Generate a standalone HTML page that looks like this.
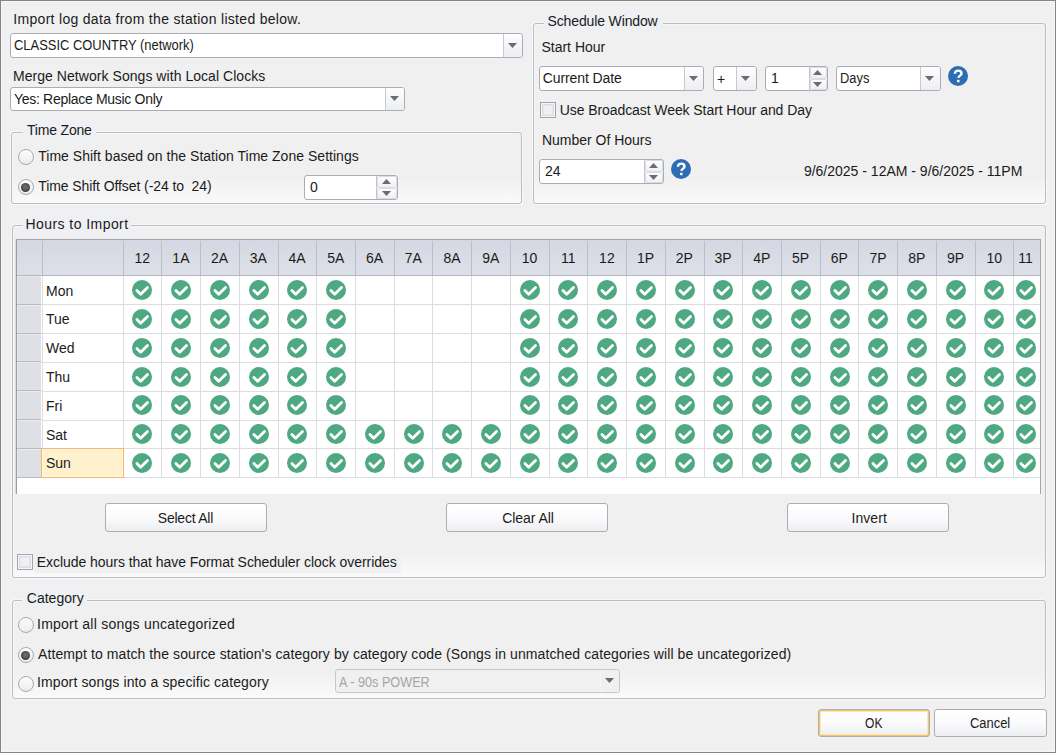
<!DOCTYPE html><html><head><meta charset="utf-8"><title>Import</title><style>
*{margin:0;padding:0;box-sizing:border-box}
html,body{width:1056px;height:753px;overflow:hidden;background:#f0f0f0}
body{position:relative;font-family:"Liberation Sans",sans-serif;font-size:14px;color:#1b1b1b}
.t{position:absolute;white-space:nowrap;line-height:16px}
.frame{position:absolute;left:0;top:0;width:1056px;height:753px;border:1px solid #858585}
.frame2{position:absolute;left:1px;top:1px;width:1054px;height:751px;border:1px solid #f6f6f6}
.grp{position:absolute;border:1px solid #bcbcc3;border-radius:3px;background:linear-gradient(rgba(250,250,250,0) calc(100% - 26px),#fafafa);box-shadow:-1px -1px 0 #f7f8fb, 1px 1px 0 #f8f9fb, inset 1px 1px 0 #f6f6f6}
.gtb{position:absolute;background:#eef0f3;border-radius:3px}
.cmb{position:absolute;background:#fff;border:1px solid #acacb4;border-radius:3px}
.cmb.dis{background:#f0f0f0;border-color:#c6c6cc}
.cbtn{position:absolute;border-left:1px solid #c8c8ce;background:linear-gradient(#fdfdfd,#eceef2);border-radius:0 2px 2px 0}
.cbtn.dis{background:#f0f0f0;border-left-color:#f6f6f6}
.sbtn{position:absolute;border:1px solid #dcdce2;border-radius:2px;background:linear-gradient(#fdfdfd,#eef0f3)}
.arr{position:absolute;width:9px;height:5px;line-height:0}
.arr svg{display:block}
.rad{position:absolute;width:16px;height:16px;border-radius:50%;border:1px solid #a8a8ae;background:linear-gradient(#fdfdfd,#ececee)}
.dot{position:absolute;width:9px;height:9px;border-radius:50%;background:radial-gradient(circle at 50% 45%,#727276 0,#58585c 45%,#1a1a1c 100%)}
.chk{position:absolute;width:16px;height:16px;border:1px solid #a4a4ac;background:#eef0f3;box-shadow:inset 0 0 0 1px #f4f5f7,inset 0 0 0 2px #dedfe4,inset 0 0 0 3px #e4e6ea}
.btn{position:absolute;border:1px solid #adadb4;border-radius:3px;background:linear-gradient(#ffffff 0%,#fbfbfc 50%,#eceef2 100%)}
.btn.def{box-shadow:inset 0 0 0 1px #f3c56a,inset 0 0 0 2px #fbe7b8}
.ico{position:absolute;width:20px;height:20px;line-height:0}
.ico svg{display:block}
.gl{position:absolute;background:#dcdce3}
</style></head><body>
<div class="frame"></div><div class="frame2"></div>
<div class="t" style="left:13.30px;top:11px;letter-spacing:0.304px;">Import log data from the station listed below.</div>
<div class="cmb" style="left:10px;top:33px;width:513px;height:25px"></div>
<div class="cbtn" style="left:503px;top:34px;width:19px;height:23px"></div>
<div class="arr" style="left:507.7px;top:42.8px"><svg width="9" height="5" viewBox="0 0 9 5"><path d="M0 0H9L4.5 5Z" fill="#6b6b76"/></svg></div>
<div class="t" style="left:14px;top:37px;"></div>
<div class="t" style="left:14.30px;top:37px;transform:scaleX(0.9236);transform-origin:0 0;">CLASSIC COUNTRY (network)</div>
<div class="t" style="left:13.00px;top:68px;letter-spacing:0.049px;">Merge Network Songs with Local Clocks</div>
<div class="cmb" style="left:10px;top:87px;width:395px;height:24px"></div>
<div class="cbtn" style="left:385px;top:88px;width:19px;height:22px"></div>
<div class="arr" style="left:389.7px;top:96.3px"><svg width="9" height="5" viewBox="0 0 9 5"><path d="M0 0H9L4.5 5Z" fill="#6b6b76"/></svg></div>
<div class="t" style="left:14px;top:91px;"></div>
<div class="t" style="left:14.00px;top:91px;letter-spacing:-0.300px;">Yes: Replace Music Only</div>
<div class="grp" style="left:11px;top:132px;width:511px;height:72px"></div>
<div class="gtb" style="left:23px;top:119px;width:73px;height:22px"></div>
<div class="t" style="left:27px;top:122px;"></div>
<div class="t" style="left:27.00px;top:122px;letter-spacing:-0.188px;">Time Zone</div>
<div class="rad" style="left:17.5px;top:149px"></div>
<div class="t" style="left:38.20px;top:148px;letter-spacing:0.025px;">Time Shift based on the Station Time Zone Settings</div>
<div class="rad" style="left:17.5px;top:179px"></div>
<div class="dot" style="left:21.0px;top:182.5px"></div>
<div class="t" style="left:38.20px;top:178px;letter-spacing:-0.082px;">Time Shift Offset (-24 to&nbsp; 24)</div>
<div class="cmb" style="left:304px;top:175px;width:94px;height:25px"></div>
<div style="position:absolute;left:376px;top:176px;width:1px;height:23px;background:#c4c4cc"></div>
<div class="sbtn" style="left:377px;top:176px;width:20px;height:11.5px"></div>
<div class="sbtn" style="left:377px;top:187.5px;width:20px;height:11.5px"></div>
<div class="arr" style="left:381.8px;top:179.25px"><svg width="9" height="5" viewBox="0 0 9 5"><path d="M0 5H9L4.5 0Z" fill="#6b6b76"/></svg></div>
<div class="arr" style="left:381.8px;top:190.75px"><svg width="9" height="5" viewBox="0 0 9 5"><path d="M0 0H9L4.5 5Z" fill="#6b6b76"/></svg></div>
<div class="t" style="left:310px;top:179px;">0</div>
<div class="grp" style="left:533px;top:23px;width:513px;height:181px"></div>
<div class="gtb" style="left:544px;top:10px;width:119px;height:22px"></div>
<div class="t" style="left:547px;top:13px;"></div>
<div class="t" style="left:547.50px;top:13px;letter-spacing:-0.132px;">Schedule Window</div>
<div class="t" style="left:541.40px;top:39px;letter-spacing:0.007px;">Start Hour</div>
<div class="cmb" style="left:539px;top:66px;width:165px;height:25px"></div>
<div class="cbtn" style="left:684px;top:67px;width:19px;height:23px"></div>
<div class="arr" style="left:688.7px;top:75.8px"><svg width="9" height="5" viewBox="0 0 9 5"><path d="M0 0H9L4.5 5Z" fill="#6b6b76"/></svg></div>
<div class="t" style="left:543px;top:70px;"></div>
<div class="t" style="left:542.80px;top:70px;letter-spacing:-0.114px;">Current Date</div>
<div class="cmb" style="left:713px;top:66px;width:44px;height:25px"></div>
<div class="cbtn" style="left:736px;top:67px;width:20px;height:23px"></div>
<div class="arr" style="left:741.2px;top:75.8px"><svg width="9" height="5" viewBox="0 0 9 5"><path d="M0 0H9L4.5 5Z" fill="#6b6b76"/></svg></div>
<div class="t" style="left:717px;top:71px;">+</div>
<div class="cmb" style="left:765px;top:66px;width:63px;height:25px"></div>
<div style="position:absolute;left:809px;top:67px;width:1px;height:23px;background:#c4c4cc"></div>
<div class="sbtn" style="left:810px;top:67px;width:17px;height:11.5px"></div>
<div class="sbtn" style="left:810px;top:78.5px;width:17px;height:11.5px"></div>
<div class="arr" style="left:813.3px;top:70.25px"><svg width="9" height="5" viewBox="0 0 9 5"><path d="M0 5H9L4.5 0Z" fill="#6b6b76"/></svg></div>
<div class="arr" style="left:813.3px;top:81.75px"><svg width="9" height="5" viewBox="0 0 9 5"><path d="M0 0H9L4.5 5Z" fill="#6b6b76"/></svg></div>
<div class="t" style="left:771px;top:70px;">1</div>
<div class="cmb" style="left:836px;top:66px;width:105px;height:25px"></div>
<div class="cbtn" style="left:920px;top:67px;width:20px;height:23px"></div>
<div class="arr" style="left:925.2px;top:75.8px"><svg width="9" height="5" viewBox="0 0 9 5"><path d="M0 0H9L4.5 5Z" fill="#6b6b76"/></svg></div>
<div class="t" style="left:840px;top:70px;"></div>
<div class="t" style="left:839.68px;top:70px;transform:scaleX(0.9192);transform-origin:0 0;">Days</div>
<div class="ico" style="left:948px;top:66px"><svg width="20" height="20" viewBox="0 0 20 20"><circle cx="10" cy="10" r="10" fill="#2e6db4"/><path d="M6.9 7.7C6.9 5.6 8.3 4.6 10.2 4.6C12.2 4.6 13.5 5.7 13.5 7.4C13.5 9.6 10.7 9.6 10.4 11.9" stroke="#fff" stroke-width="2.4" fill="none"/><rect x="9.1" y="13.8" width="2.4" height="2.4" fill="#fff"/></svg></div>
<div class="chk" style="left:540px;top:102px"></div>
<div class="t" style="left:559.70px;top:102px;letter-spacing:-0.077px;">Use Broadcast Week Start Hour and Day</div>
<div class="t" style="left:542.00px;top:132px;letter-spacing:-0.021px;">Number Of Hours</div>
<div class="cmb" style="left:539px;top:159px;width:125px;height:25px"></div>
<div style="position:absolute;left:644px;top:160px;width:1px;height:23px;background:#c4c4cc"></div>
<div class="sbtn" style="left:645px;top:160px;width:18px;height:11.5px"></div>
<div class="sbtn" style="left:645px;top:171.5px;width:18px;height:11.5px"></div>
<div class="arr" style="left:648.8px;top:163.25px"><svg width="9" height="5" viewBox="0 0 9 5"><path d="M0 5H9L4.5 0Z" fill="#6b6b76"/></svg></div>
<div class="arr" style="left:648.8px;top:174.75px"><svg width="9" height="5" viewBox="0 0 9 5"><path d="M0 0H9L4.5 5Z" fill="#6b6b76"/></svg></div>
<div class="t" style="left:545px;top:163px;">24</div>
<div class="ico" style="left:671px;top:159px"><svg width="20" height="20" viewBox="0 0 20 20"><circle cx="10" cy="10" r="10" fill="#2e6db4"/><path d="M6.9 7.7C6.9 5.6 8.3 4.6 10.2 4.6C12.2 4.6 13.5 5.7 13.5 7.4C13.5 9.6 10.7 9.6 10.4 11.9" stroke="#fff" stroke-width="2.4" fill="none"/><rect x="9.1" y="13.8" width="2.4" height="2.4" fill="#fff"/></svg></div>
<div class="t" style="left:803.90px;top:163px;letter-spacing:0.001px;">9/6/2025 - 12AM - 9/6/2025 - 11PM</div>
<div class="grp" style="left:12px;top:225px;width:1034px;height:353px"></div>
<div class="gtb" style="left:23px;top:213px;width:108px;height:22px"></div>
<div class="t" style="left:26.5px;top:216px;"></div>
<div class="t" style="left:25.50px;top:216px;letter-spacing:0.437px;">Hours to Import</div>
<div style="position:absolute;left:16px;top:239px;width:1025px;height:255px;background:#fff;border-left:1px solid #9c9ca4;border-top:1px solid #a4a4ac;border-right:1px solid #a4a4ac;box-shadow:-0.5px 0 0 #c8c8ce"></div>
<div style="position:absolute;left:17px;top:240px;width:1023px;height:36px;background:linear-gradient(#d5d8e2,#dde0e8);border-bottom:1px solid #b4b6c0"></div>
<div style="position:absolute;left:17px;top:276px;width:24px;height:202px;background:#dfe0e5"></div>
<div style="position:absolute;left:17px;top:276.0px;width:24px;height:27.8px;border-top:1px solid #ebebef;border-left:1px solid #ebebef"></div>
<div style="position:absolute;left:17px;top:303.8px;width:24px;height:1px;background:#b9b9c1"></div>
<div style="position:absolute;left:17px;top:304.8px;width:24px;height:27.8px;border-top:1px solid #ebebef;border-left:1px solid #ebebef"></div>
<div style="position:absolute;left:17px;top:332.6px;width:24px;height:1px;background:#b9b9c1"></div>
<div style="position:absolute;left:17px;top:333.6px;width:24px;height:27.8px;border-top:1px solid #ebebef;border-left:1px solid #ebebef"></div>
<div style="position:absolute;left:17px;top:361.4px;width:24px;height:1px;background:#b9b9c1"></div>
<div style="position:absolute;left:17px;top:362.4px;width:24px;height:27.8px;border-top:1px solid #ebebef;border-left:1px solid #ebebef"></div>
<div style="position:absolute;left:17px;top:390.2px;width:24px;height:1px;background:#b9b9c1"></div>
<div style="position:absolute;left:17px;top:391.2px;width:24px;height:27.8px;border-top:1px solid #ebebef;border-left:1px solid #ebebef"></div>
<div style="position:absolute;left:17px;top:419.0px;width:24px;height:1px;background:#b9b9c1"></div>
<div style="position:absolute;left:17px;top:420.0px;width:24px;height:27.8px;border-top:1px solid #ebebef;border-left:1px solid #ebebef"></div>
<div style="position:absolute;left:17px;top:447.8px;width:24px;height:1px;background:#b9b9c1"></div>
<div style="position:absolute;left:17px;top:448.8px;width:24px;height:27.8px;border-top:1px solid #ebebef;border-left:1px solid #ebebef"></div>
<div style="position:absolute;left:17px;top:476.6px;width:24px;height:1px;background:#b9b9c1"></div>
<div style="position:absolute;left:41.5px;top:241px;width:1px;height:34px;background:#bcbec8"></div>
<div style="position:absolute;left:122.6px;top:241px;width:1px;height:34px;background:#bcbec8"></div>
<div style="position:absolute;left:161.3px;top:241px;width:1px;height:34px;background:#bcbec8"></div>
<div style="position:absolute;left:200.1px;top:241px;width:1px;height:34px;background:#bcbec8"></div>
<div style="position:absolute;left:238.8px;top:241px;width:1px;height:34px;background:#bcbec8"></div>
<div style="position:absolute;left:277.5px;top:241px;width:1px;height:34px;background:#bcbec8"></div>
<div style="position:absolute;left:316.2px;top:241px;width:1px;height:34px;background:#bcbec8"></div>
<div style="position:absolute;left:355.0px;top:241px;width:1px;height:34px;background:#bcbec8"></div>
<div style="position:absolute;left:393.7px;top:241px;width:1px;height:34px;background:#bcbec8"></div>
<div style="position:absolute;left:432.4px;top:241px;width:1px;height:34px;background:#bcbec8"></div>
<div style="position:absolute;left:471.1px;top:241px;width:1px;height:34px;background:#bcbec8"></div>
<div style="position:absolute;left:509.9px;top:241px;width:1px;height:34px;background:#bcbec8"></div>
<div style="position:absolute;left:548.6px;top:241px;width:1px;height:34px;background:#bcbec8"></div>
<div style="position:absolute;left:587.3px;top:241px;width:1px;height:34px;background:#bcbec8"></div>
<div style="position:absolute;left:626.0px;top:241px;width:1px;height:34px;background:#bcbec8"></div>
<div style="position:absolute;left:664.8px;top:241px;width:1px;height:34px;background:#bcbec8"></div>
<div style="position:absolute;left:703.5px;top:241px;width:1px;height:34px;background:#bcbec8"></div>
<div style="position:absolute;left:742.2px;top:241px;width:1px;height:34px;background:#bcbec8"></div>
<div style="position:absolute;left:780.9px;top:241px;width:1px;height:34px;background:#bcbec8"></div>
<div style="position:absolute;left:819.7px;top:241px;width:1px;height:34px;background:#bcbec8"></div>
<div style="position:absolute;left:858.4px;top:241px;width:1px;height:34px;background:#bcbec8"></div>
<div style="position:absolute;left:897.1px;top:241px;width:1px;height:34px;background:#bcbec8"></div>
<div style="position:absolute;left:935.8px;top:241px;width:1px;height:34px;background:#bcbec8"></div>
<div style="position:absolute;left:974.6px;top:241px;width:1px;height:34px;background:#bcbec8"></div>
<div style="position:absolute;left:1013.3px;top:241px;width:1px;height:34px;background:#bcbec8"></div>
<div class="gl" style="left:41px;top:304.3px;width:999px;height:1px"></div>
<div class="gl" style="left:41px;top:333.1px;width:999px;height:1px"></div>
<div class="gl" style="left:41px;top:361.9px;width:999px;height:1px"></div>
<div class="gl" style="left:41px;top:390.7px;width:999px;height:1px"></div>
<div class="gl" style="left:41px;top:419.5px;width:999px;height:1px"></div>
<div class="gl" style="left:41px;top:448.3px;width:999px;height:1px"></div>
<div class="gl" style="left:41px;top:477.1px;width:999px;height:1px"></div>
<div class="gl" style="left:41.5px;top:276px;width:1px;height:202px"></div>
<div class="gl" style="left:122.6px;top:276px;width:1px;height:202px"></div>
<div class="gl" style="left:161.3px;top:276px;width:1px;height:202px"></div>
<div class="gl" style="left:200.1px;top:276px;width:1px;height:202px"></div>
<div class="gl" style="left:238.8px;top:276px;width:1px;height:202px"></div>
<div class="gl" style="left:277.5px;top:276px;width:1px;height:202px"></div>
<div class="gl" style="left:316.2px;top:276px;width:1px;height:202px"></div>
<div class="gl" style="left:355.0px;top:276px;width:1px;height:202px"></div>
<div class="gl" style="left:393.7px;top:276px;width:1px;height:202px"></div>
<div class="gl" style="left:432.4px;top:276px;width:1px;height:202px"></div>
<div class="gl" style="left:471.1px;top:276px;width:1px;height:202px"></div>
<div class="gl" style="left:509.9px;top:276px;width:1px;height:202px"></div>
<div class="gl" style="left:548.6px;top:276px;width:1px;height:202px"></div>
<div class="gl" style="left:587.3px;top:276px;width:1px;height:202px"></div>
<div class="gl" style="left:626.0px;top:276px;width:1px;height:202px"></div>
<div class="gl" style="left:664.8px;top:276px;width:1px;height:202px"></div>
<div class="gl" style="left:703.5px;top:276px;width:1px;height:202px"></div>
<div class="gl" style="left:742.2px;top:276px;width:1px;height:202px"></div>
<div class="gl" style="left:780.9px;top:276px;width:1px;height:202px"></div>
<div class="gl" style="left:819.7px;top:276px;width:1px;height:202px"></div>
<div class="gl" style="left:858.4px;top:276px;width:1px;height:202px"></div>
<div class="gl" style="left:897.1px;top:276px;width:1px;height:202px"></div>
<div class="gl" style="left:935.8px;top:276px;width:1px;height:202px"></div>
<div class="gl" style="left:974.6px;top:276px;width:1px;height:202px"></div>
<div class="gl" style="left:1013.3px;top:276px;width:1px;height:202px"></div>
<div class="t" style="left:122.19999999999999px;top:249.5px;width:40px;text-align:center;">12</div>
<div class="t" style="left:160.926px;top:249.5px;width:40px;text-align:center;">1A</div>
<div class="t" style="left:199.652px;top:249.5px;width:40px;text-align:center;">2A</div>
<div class="t" style="left:238.378px;top:249.5px;width:40px;text-align:center;">3A</div>
<div class="t" style="left:277.10400000000004px;top:249.5px;width:40px;text-align:center;">4A</div>
<div class="t" style="left:315.83000000000004px;top:249.5px;width:40px;text-align:center;">5A</div>
<div class="t" style="left:354.55600000000004px;top:249.5px;width:40px;text-align:center;">6A</div>
<div class="t" style="left:393.28200000000004px;top:249.5px;width:40px;text-align:center;">7A</div>
<div class="t" style="left:432.00800000000004px;top:249.5px;width:40px;text-align:center;">8A</div>
<div class="t" style="left:470.73400000000004px;top:249.5px;width:40px;text-align:center;">9A</div>
<div class="t" style="left:509.46000000000004px;top:249.5px;width:40px;text-align:center;">10</div>
<div class="t" style="left:548.186px;top:249.5px;width:40px;text-align:center;">11</div>
<div class="t" style="left:586.912px;top:249.5px;width:40px;text-align:center;">12</div>
<div class="t" style="left:625.638px;top:249.5px;width:40px;text-align:center;">1P</div>
<div class="t" style="left:664.364px;top:249.5px;width:40px;text-align:center;">2P</div>
<div class="t" style="left:703.09px;top:249.5px;width:40px;text-align:center;">3P</div>
<div class="t" style="left:741.816px;top:249.5px;width:40px;text-align:center;">4P</div>
<div class="t" style="left:780.542px;top:249.5px;width:40px;text-align:center;">5P</div>
<div class="t" style="left:819.268px;top:249.5px;width:40px;text-align:center;">6P</div>
<div class="t" style="left:857.994px;top:249.5px;width:40px;text-align:center;">7P</div>
<div class="t" style="left:896.72px;top:249.5px;width:40px;text-align:center;">8P</div>
<div class="t" style="left:935.446px;top:249.5px;width:40px;text-align:center;">9P</div>
<div class="t" style="left:974.172px;top:249.5px;width:40px;text-align:center;">10</div>
<div class="t" style="left:1005.598px;top:249.5px;width:40px;text-align:center;">11</div>
<div style="position:absolute;left:41px;top:448.3px;width:82.5px;height:29.8px;background:#fff1cd;border:1px solid #f9b66c;box-shadow:inset 0 0 0 1px #fff6df"></div>
<div class="t" style="left:46px;top:282.5px;">Mon</div>
<div class="ico" style="left:132.4px;top:280.1px"><svg width="20" height="20" viewBox="0 0 20 20"><circle cx="10" cy="10" r="10" fill="#4ea982"/><path d="M4.9 10.4L8.7 14.2L15.5 7.6" stroke="#fff" stroke-width="2.8" fill="none" stroke-linecap="round" stroke-linejoin="round"/></svg></div>
<div class="ico" style="left:171.1px;top:280.1px"><svg width="20" height="20" viewBox="0 0 20 20"><circle cx="10" cy="10" r="10" fill="#4ea982"/><path d="M4.9 10.4L8.7 14.2L15.5 7.6" stroke="#fff" stroke-width="2.8" fill="none" stroke-linecap="round" stroke-linejoin="round"/></svg></div>
<div class="ico" style="left:209.9px;top:280.1px"><svg width="20" height="20" viewBox="0 0 20 20"><circle cx="10" cy="10" r="10" fill="#4ea982"/><path d="M4.9 10.4L8.7 14.2L15.5 7.6" stroke="#fff" stroke-width="2.8" fill="none" stroke-linecap="round" stroke-linejoin="round"/></svg></div>
<div class="ico" style="left:248.6px;top:280.1px"><svg width="20" height="20" viewBox="0 0 20 20"><circle cx="10" cy="10" r="10" fill="#4ea982"/><path d="M4.9 10.4L8.7 14.2L15.5 7.6" stroke="#fff" stroke-width="2.8" fill="none" stroke-linecap="round" stroke-linejoin="round"/></svg></div>
<div class="ico" style="left:287.3px;top:280.1px"><svg width="20" height="20" viewBox="0 0 20 20"><circle cx="10" cy="10" r="10" fill="#4ea982"/><path d="M4.9 10.4L8.7 14.2L15.5 7.6" stroke="#fff" stroke-width="2.8" fill="none" stroke-linecap="round" stroke-linejoin="round"/></svg></div>
<div class="ico" style="left:326.0px;top:280.1px"><svg width="20" height="20" viewBox="0 0 20 20"><circle cx="10" cy="10" r="10" fill="#4ea982"/><path d="M4.9 10.4L8.7 14.2L15.5 7.6" stroke="#fff" stroke-width="2.8" fill="none" stroke-linecap="round" stroke-linejoin="round"/></svg></div>
<div class="ico" style="left:519.7px;top:280.1px"><svg width="20" height="20" viewBox="0 0 20 20"><circle cx="10" cy="10" r="10" fill="#4ea982"/><path d="M4.9 10.4L8.7 14.2L15.5 7.6" stroke="#fff" stroke-width="2.8" fill="none" stroke-linecap="round" stroke-linejoin="round"/></svg></div>
<div class="ico" style="left:558.4px;top:280.1px"><svg width="20" height="20" viewBox="0 0 20 20"><circle cx="10" cy="10" r="10" fill="#4ea982"/><path d="M4.9 10.4L8.7 14.2L15.5 7.6" stroke="#fff" stroke-width="2.8" fill="none" stroke-linecap="round" stroke-linejoin="round"/></svg></div>
<div class="ico" style="left:597.1px;top:280.1px"><svg width="20" height="20" viewBox="0 0 20 20"><circle cx="10" cy="10" r="10" fill="#4ea982"/><path d="M4.9 10.4L8.7 14.2L15.5 7.6" stroke="#fff" stroke-width="2.8" fill="none" stroke-linecap="round" stroke-linejoin="round"/></svg></div>
<div class="ico" style="left:635.8px;top:280.1px"><svg width="20" height="20" viewBox="0 0 20 20"><circle cx="10" cy="10" r="10" fill="#4ea982"/><path d="M4.9 10.4L8.7 14.2L15.5 7.6" stroke="#fff" stroke-width="2.8" fill="none" stroke-linecap="round" stroke-linejoin="round"/></svg></div>
<div class="ico" style="left:674.6px;top:280.1px"><svg width="20" height="20" viewBox="0 0 20 20"><circle cx="10" cy="10" r="10" fill="#4ea982"/><path d="M4.9 10.4L8.7 14.2L15.5 7.6" stroke="#fff" stroke-width="2.8" fill="none" stroke-linecap="round" stroke-linejoin="round"/></svg></div>
<div class="ico" style="left:713.3px;top:280.1px"><svg width="20" height="20" viewBox="0 0 20 20"><circle cx="10" cy="10" r="10" fill="#4ea982"/><path d="M4.9 10.4L8.7 14.2L15.5 7.6" stroke="#fff" stroke-width="2.8" fill="none" stroke-linecap="round" stroke-linejoin="round"/></svg></div>
<div class="ico" style="left:752.0px;top:280.1px"><svg width="20" height="20" viewBox="0 0 20 20"><circle cx="10" cy="10" r="10" fill="#4ea982"/><path d="M4.9 10.4L8.7 14.2L15.5 7.6" stroke="#fff" stroke-width="2.8" fill="none" stroke-linecap="round" stroke-linejoin="round"/></svg></div>
<div class="ico" style="left:790.7px;top:280.1px"><svg width="20" height="20" viewBox="0 0 20 20"><circle cx="10" cy="10" r="10" fill="#4ea982"/><path d="M4.9 10.4L8.7 14.2L15.5 7.6" stroke="#fff" stroke-width="2.8" fill="none" stroke-linecap="round" stroke-linejoin="round"/></svg></div>
<div class="ico" style="left:829.5px;top:280.1px"><svg width="20" height="20" viewBox="0 0 20 20"><circle cx="10" cy="10" r="10" fill="#4ea982"/><path d="M4.9 10.4L8.7 14.2L15.5 7.6" stroke="#fff" stroke-width="2.8" fill="none" stroke-linecap="round" stroke-linejoin="round"/></svg></div>
<div class="ico" style="left:868.2px;top:280.1px"><svg width="20" height="20" viewBox="0 0 20 20"><circle cx="10" cy="10" r="10" fill="#4ea982"/><path d="M4.9 10.4L8.7 14.2L15.5 7.6" stroke="#fff" stroke-width="2.8" fill="none" stroke-linecap="round" stroke-linejoin="round"/></svg></div>
<div class="ico" style="left:906.9px;top:280.1px"><svg width="20" height="20" viewBox="0 0 20 20"><circle cx="10" cy="10" r="10" fill="#4ea982"/><path d="M4.9 10.4L8.7 14.2L15.5 7.6" stroke="#fff" stroke-width="2.8" fill="none" stroke-linecap="round" stroke-linejoin="round"/></svg></div>
<div class="ico" style="left:945.6px;top:280.1px"><svg width="20" height="20" viewBox="0 0 20 20"><circle cx="10" cy="10" r="10" fill="#4ea982"/><path d="M4.9 10.4L8.7 14.2L15.5 7.6" stroke="#fff" stroke-width="2.8" fill="none" stroke-linecap="round" stroke-linejoin="round"/></svg></div>
<div class="ico" style="left:984.4px;top:280.1px"><svg width="20" height="20" viewBox="0 0 20 20"><circle cx="10" cy="10" r="10" fill="#4ea982"/><path d="M4.9 10.4L8.7 14.2L15.5 7.6" stroke="#fff" stroke-width="2.8" fill="none" stroke-linecap="round" stroke-linejoin="round"/></svg></div>
<div class="ico" style="left:1015.7px;top:280.1px"><svg width="20" height="20" viewBox="0 0 20 20"><circle cx="10" cy="10" r="10" fill="#4ea982"/><path d="M4.9 10.4L8.7 14.2L15.5 7.6" stroke="#fff" stroke-width="2.8" fill="none" stroke-linecap="round" stroke-linejoin="round"/></svg></div>
<div class="t" style="left:46px;top:311.3px;">Tue</div>
<div class="ico" style="left:132.4px;top:308.9px"><svg width="20" height="20" viewBox="0 0 20 20"><circle cx="10" cy="10" r="10" fill="#4ea982"/><path d="M4.9 10.4L8.7 14.2L15.5 7.6" stroke="#fff" stroke-width="2.8" fill="none" stroke-linecap="round" stroke-linejoin="round"/></svg></div>
<div class="ico" style="left:171.1px;top:308.9px"><svg width="20" height="20" viewBox="0 0 20 20"><circle cx="10" cy="10" r="10" fill="#4ea982"/><path d="M4.9 10.4L8.7 14.2L15.5 7.6" stroke="#fff" stroke-width="2.8" fill="none" stroke-linecap="round" stroke-linejoin="round"/></svg></div>
<div class="ico" style="left:209.9px;top:308.9px"><svg width="20" height="20" viewBox="0 0 20 20"><circle cx="10" cy="10" r="10" fill="#4ea982"/><path d="M4.9 10.4L8.7 14.2L15.5 7.6" stroke="#fff" stroke-width="2.8" fill="none" stroke-linecap="round" stroke-linejoin="round"/></svg></div>
<div class="ico" style="left:248.6px;top:308.9px"><svg width="20" height="20" viewBox="0 0 20 20"><circle cx="10" cy="10" r="10" fill="#4ea982"/><path d="M4.9 10.4L8.7 14.2L15.5 7.6" stroke="#fff" stroke-width="2.8" fill="none" stroke-linecap="round" stroke-linejoin="round"/></svg></div>
<div class="ico" style="left:287.3px;top:308.9px"><svg width="20" height="20" viewBox="0 0 20 20"><circle cx="10" cy="10" r="10" fill="#4ea982"/><path d="M4.9 10.4L8.7 14.2L15.5 7.6" stroke="#fff" stroke-width="2.8" fill="none" stroke-linecap="round" stroke-linejoin="round"/></svg></div>
<div class="ico" style="left:326.0px;top:308.9px"><svg width="20" height="20" viewBox="0 0 20 20"><circle cx="10" cy="10" r="10" fill="#4ea982"/><path d="M4.9 10.4L8.7 14.2L15.5 7.6" stroke="#fff" stroke-width="2.8" fill="none" stroke-linecap="round" stroke-linejoin="round"/></svg></div>
<div class="ico" style="left:519.7px;top:308.9px"><svg width="20" height="20" viewBox="0 0 20 20"><circle cx="10" cy="10" r="10" fill="#4ea982"/><path d="M4.9 10.4L8.7 14.2L15.5 7.6" stroke="#fff" stroke-width="2.8" fill="none" stroke-linecap="round" stroke-linejoin="round"/></svg></div>
<div class="ico" style="left:558.4px;top:308.9px"><svg width="20" height="20" viewBox="0 0 20 20"><circle cx="10" cy="10" r="10" fill="#4ea982"/><path d="M4.9 10.4L8.7 14.2L15.5 7.6" stroke="#fff" stroke-width="2.8" fill="none" stroke-linecap="round" stroke-linejoin="round"/></svg></div>
<div class="ico" style="left:597.1px;top:308.9px"><svg width="20" height="20" viewBox="0 0 20 20"><circle cx="10" cy="10" r="10" fill="#4ea982"/><path d="M4.9 10.4L8.7 14.2L15.5 7.6" stroke="#fff" stroke-width="2.8" fill="none" stroke-linecap="round" stroke-linejoin="round"/></svg></div>
<div class="ico" style="left:635.8px;top:308.9px"><svg width="20" height="20" viewBox="0 0 20 20"><circle cx="10" cy="10" r="10" fill="#4ea982"/><path d="M4.9 10.4L8.7 14.2L15.5 7.6" stroke="#fff" stroke-width="2.8" fill="none" stroke-linecap="round" stroke-linejoin="round"/></svg></div>
<div class="ico" style="left:674.6px;top:308.9px"><svg width="20" height="20" viewBox="0 0 20 20"><circle cx="10" cy="10" r="10" fill="#4ea982"/><path d="M4.9 10.4L8.7 14.2L15.5 7.6" stroke="#fff" stroke-width="2.8" fill="none" stroke-linecap="round" stroke-linejoin="round"/></svg></div>
<div class="ico" style="left:713.3px;top:308.9px"><svg width="20" height="20" viewBox="0 0 20 20"><circle cx="10" cy="10" r="10" fill="#4ea982"/><path d="M4.9 10.4L8.7 14.2L15.5 7.6" stroke="#fff" stroke-width="2.8" fill="none" stroke-linecap="round" stroke-linejoin="round"/></svg></div>
<div class="ico" style="left:752.0px;top:308.9px"><svg width="20" height="20" viewBox="0 0 20 20"><circle cx="10" cy="10" r="10" fill="#4ea982"/><path d="M4.9 10.4L8.7 14.2L15.5 7.6" stroke="#fff" stroke-width="2.8" fill="none" stroke-linecap="round" stroke-linejoin="round"/></svg></div>
<div class="ico" style="left:790.7px;top:308.9px"><svg width="20" height="20" viewBox="0 0 20 20"><circle cx="10" cy="10" r="10" fill="#4ea982"/><path d="M4.9 10.4L8.7 14.2L15.5 7.6" stroke="#fff" stroke-width="2.8" fill="none" stroke-linecap="round" stroke-linejoin="round"/></svg></div>
<div class="ico" style="left:829.5px;top:308.9px"><svg width="20" height="20" viewBox="0 0 20 20"><circle cx="10" cy="10" r="10" fill="#4ea982"/><path d="M4.9 10.4L8.7 14.2L15.5 7.6" stroke="#fff" stroke-width="2.8" fill="none" stroke-linecap="round" stroke-linejoin="round"/></svg></div>
<div class="ico" style="left:868.2px;top:308.9px"><svg width="20" height="20" viewBox="0 0 20 20"><circle cx="10" cy="10" r="10" fill="#4ea982"/><path d="M4.9 10.4L8.7 14.2L15.5 7.6" stroke="#fff" stroke-width="2.8" fill="none" stroke-linecap="round" stroke-linejoin="round"/></svg></div>
<div class="ico" style="left:906.9px;top:308.9px"><svg width="20" height="20" viewBox="0 0 20 20"><circle cx="10" cy="10" r="10" fill="#4ea982"/><path d="M4.9 10.4L8.7 14.2L15.5 7.6" stroke="#fff" stroke-width="2.8" fill="none" stroke-linecap="round" stroke-linejoin="round"/></svg></div>
<div class="ico" style="left:945.6px;top:308.9px"><svg width="20" height="20" viewBox="0 0 20 20"><circle cx="10" cy="10" r="10" fill="#4ea982"/><path d="M4.9 10.4L8.7 14.2L15.5 7.6" stroke="#fff" stroke-width="2.8" fill="none" stroke-linecap="round" stroke-linejoin="round"/></svg></div>
<div class="ico" style="left:984.4px;top:308.9px"><svg width="20" height="20" viewBox="0 0 20 20"><circle cx="10" cy="10" r="10" fill="#4ea982"/><path d="M4.9 10.4L8.7 14.2L15.5 7.6" stroke="#fff" stroke-width="2.8" fill="none" stroke-linecap="round" stroke-linejoin="round"/></svg></div>
<div class="ico" style="left:1015.7px;top:308.9px"><svg width="20" height="20" viewBox="0 0 20 20"><circle cx="10" cy="10" r="10" fill="#4ea982"/><path d="M4.9 10.4L8.7 14.2L15.5 7.6" stroke="#fff" stroke-width="2.8" fill="none" stroke-linecap="round" stroke-linejoin="round"/></svg></div>
<div class="t" style="left:46px;top:340.1px;">Wed</div>
<div class="ico" style="left:132.4px;top:337.7px"><svg width="20" height="20" viewBox="0 0 20 20"><circle cx="10" cy="10" r="10" fill="#4ea982"/><path d="M4.9 10.4L8.7 14.2L15.5 7.6" stroke="#fff" stroke-width="2.8" fill="none" stroke-linecap="round" stroke-linejoin="round"/></svg></div>
<div class="ico" style="left:171.1px;top:337.7px"><svg width="20" height="20" viewBox="0 0 20 20"><circle cx="10" cy="10" r="10" fill="#4ea982"/><path d="M4.9 10.4L8.7 14.2L15.5 7.6" stroke="#fff" stroke-width="2.8" fill="none" stroke-linecap="round" stroke-linejoin="round"/></svg></div>
<div class="ico" style="left:209.9px;top:337.7px"><svg width="20" height="20" viewBox="0 0 20 20"><circle cx="10" cy="10" r="10" fill="#4ea982"/><path d="M4.9 10.4L8.7 14.2L15.5 7.6" stroke="#fff" stroke-width="2.8" fill="none" stroke-linecap="round" stroke-linejoin="round"/></svg></div>
<div class="ico" style="left:248.6px;top:337.7px"><svg width="20" height="20" viewBox="0 0 20 20"><circle cx="10" cy="10" r="10" fill="#4ea982"/><path d="M4.9 10.4L8.7 14.2L15.5 7.6" stroke="#fff" stroke-width="2.8" fill="none" stroke-linecap="round" stroke-linejoin="round"/></svg></div>
<div class="ico" style="left:287.3px;top:337.7px"><svg width="20" height="20" viewBox="0 0 20 20"><circle cx="10" cy="10" r="10" fill="#4ea982"/><path d="M4.9 10.4L8.7 14.2L15.5 7.6" stroke="#fff" stroke-width="2.8" fill="none" stroke-linecap="round" stroke-linejoin="round"/></svg></div>
<div class="ico" style="left:326.0px;top:337.7px"><svg width="20" height="20" viewBox="0 0 20 20"><circle cx="10" cy="10" r="10" fill="#4ea982"/><path d="M4.9 10.4L8.7 14.2L15.5 7.6" stroke="#fff" stroke-width="2.8" fill="none" stroke-linecap="round" stroke-linejoin="round"/></svg></div>
<div class="ico" style="left:519.7px;top:337.7px"><svg width="20" height="20" viewBox="0 0 20 20"><circle cx="10" cy="10" r="10" fill="#4ea982"/><path d="M4.9 10.4L8.7 14.2L15.5 7.6" stroke="#fff" stroke-width="2.8" fill="none" stroke-linecap="round" stroke-linejoin="round"/></svg></div>
<div class="ico" style="left:558.4px;top:337.7px"><svg width="20" height="20" viewBox="0 0 20 20"><circle cx="10" cy="10" r="10" fill="#4ea982"/><path d="M4.9 10.4L8.7 14.2L15.5 7.6" stroke="#fff" stroke-width="2.8" fill="none" stroke-linecap="round" stroke-linejoin="round"/></svg></div>
<div class="ico" style="left:597.1px;top:337.7px"><svg width="20" height="20" viewBox="0 0 20 20"><circle cx="10" cy="10" r="10" fill="#4ea982"/><path d="M4.9 10.4L8.7 14.2L15.5 7.6" stroke="#fff" stroke-width="2.8" fill="none" stroke-linecap="round" stroke-linejoin="round"/></svg></div>
<div class="ico" style="left:635.8px;top:337.7px"><svg width="20" height="20" viewBox="0 0 20 20"><circle cx="10" cy="10" r="10" fill="#4ea982"/><path d="M4.9 10.4L8.7 14.2L15.5 7.6" stroke="#fff" stroke-width="2.8" fill="none" stroke-linecap="round" stroke-linejoin="round"/></svg></div>
<div class="ico" style="left:674.6px;top:337.7px"><svg width="20" height="20" viewBox="0 0 20 20"><circle cx="10" cy="10" r="10" fill="#4ea982"/><path d="M4.9 10.4L8.7 14.2L15.5 7.6" stroke="#fff" stroke-width="2.8" fill="none" stroke-linecap="round" stroke-linejoin="round"/></svg></div>
<div class="ico" style="left:713.3px;top:337.7px"><svg width="20" height="20" viewBox="0 0 20 20"><circle cx="10" cy="10" r="10" fill="#4ea982"/><path d="M4.9 10.4L8.7 14.2L15.5 7.6" stroke="#fff" stroke-width="2.8" fill="none" stroke-linecap="round" stroke-linejoin="round"/></svg></div>
<div class="ico" style="left:752.0px;top:337.7px"><svg width="20" height="20" viewBox="0 0 20 20"><circle cx="10" cy="10" r="10" fill="#4ea982"/><path d="M4.9 10.4L8.7 14.2L15.5 7.6" stroke="#fff" stroke-width="2.8" fill="none" stroke-linecap="round" stroke-linejoin="round"/></svg></div>
<div class="ico" style="left:790.7px;top:337.7px"><svg width="20" height="20" viewBox="0 0 20 20"><circle cx="10" cy="10" r="10" fill="#4ea982"/><path d="M4.9 10.4L8.7 14.2L15.5 7.6" stroke="#fff" stroke-width="2.8" fill="none" stroke-linecap="round" stroke-linejoin="round"/></svg></div>
<div class="ico" style="left:829.5px;top:337.7px"><svg width="20" height="20" viewBox="0 0 20 20"><circle cx="10" cy="10" r="10" fill="#4ea982"/><path d="M4.9 10.4L8.7 14.2L15.5 7.6" stroke="#fff" stroke-width="2.8" fill="none" stroke-linecap="round" stroke-linejoin="round"/></svg></div>
<div class="ico" style="left:868.2px;top:337.7px"><svg width="20" height="20" viewBox="0 0 20 20"><circle cx="10" cy="10" r="10" fill="#4ea982"/><path d="M4.9 10.4L8.7 14.2L15.5 7.6" stroke="#fff" stroke-width="2.8" fill="none" stroke-linecap="round" stroke-linejoin="round"/></svg></div>
<div class="ico" style="left:906.9px;top:337.7px"><svg width="20" height="20" viewBox="0 0 20 20"><circle cx="10" cy="10" r="10" fill="#4ea982"/><path d="M4.9 10.4L8.7 14.2L15.5 7.6" stroke="#fff" stroke-width="2.8" fill="none" stroke-linecap="round" stroke-linejoin="round"/></svg></div>
<div class="ico" style="left:945.6px;top:337.7px"><svg width="20" height="20" viewBox="0 0 20 20"><circle cx="10" cy="10" r="10" fill="#4ea982"/><path d="M4.9 10.4L8.7 14.2L15.5 7.6" stroke="#fff" stroke-width="2.8" fill="none" stroke-linecap="round" stroke-linejoin="round"/></svg></div>
<div class="ico" style="left:984.4px;top:337.7px"><svg width="20" height="20" viewBox="0 0 20 20"><circle cx="10" cy="10" r="10" fill="#4ea982"/><path d="M4.9 10.4L8.7 14.2L15.5 7.6" stroke="#fff" stroke-width="2.8" fill="none" stroke-linecap="round" stroke-linejoin="round"/></svg></div>
<div class="ico" style="left:1015.7px;top:337.7px"><svg width="20" height="20" viewBox="0 0 20 20"><circle cx="10" cy="10" r="10" fill="#4ea982"/><path d="M4.9 10.4L8.7 14.2L15.5 7.6" stroke="#fff" stroke-width="2.8" fill="none" stroke-linecap="round" stroke-linejoin="round"/></svg></div>
<div class="t" style="left:46px;top:368.9px;">Thu</div>
<div class="ico" style="left:132.4px;top:366.5px"><svg width="20" height="20" viewBox="0 0 20 20"><circle cx="10" cy="10" r="10" fill="#4ea982"/><path d="M4.9 10.4L8.7 14.2L15.5 7.6" stroke="#fff" stroke-width="2.8" fill="none" stroke-linecap="round" stroke-linejoin="round"/></svg></div>
<div class="ico" style="left:171.1px;top:366.5px"><svg width="20" height="20" viewBox="0 0 20 20"><circle cx="10" cy="10" r="10" fill="#4ea982"/><path d="M4.9 10.4L8.7 14.2L15.5 7.6" stroke="#fff" stroke-width="2.8" fill="none" stroke-linecap="round" stroke-linejoin="round"/></svg></div>
<div class="ico" style="left:209.9px;top:366.5px"><svg width="20" height="20" viewBox="0 0 20 20"><circle cx="10" cy="10" r="10" fill="#4ea982"/><path d="M4.9 10.4L8.7 14.2L15.5 7.6" stroke="#fff" stroke-width="2.8" fill="none" stroke-linecap="round" stroke-linejoin="round"/></svg></div>
<div class="ico" style="left:248.6px;top:366.5px"><svg width="20" height="20" viewBox="0 0 20 20"><circle cx="10" cy="10" r="10" fill="#4ea982"/><path d="M4.9 10.4L8.7 14.2L15.5 7.6" stroke="#fff" stroke-width="2.8" fill="none" stroke-linecap="round" stroke-linejoin="round"/></svg></div>
<div class="ico" style="left:287.3px;top:366.5px"><svg width="20" height="20" viewBox="0 0 20 20"><circle cx="10" cy="10" r="10" fill="#4ea982"/><path d="M4.9 10.4L8.7 14.2L15.5 7.6" stroke="#fff" stroke-width="2.8" fill="none" stroke-linecap="round" stroke-linejoin="round"/></svg></div>
<div class="ico" style="left:326.0px;top:366.5px"><svg width="20" height="20" viewBox="0 0 20 20"><circle cx="10" cy="10" r="10" fill="#4ea982"/><path d="M4.9 10.4L8.7 14.2L15.5 7.6" stroke="#fff" stroke-width="2.8" fill="none" stroke-linecap="round" stroke-linejoin="round"/></svg></div>
<div class="ico" style="left:519.7px;top:366.5px"><svg width="20" height="20" viewBox="0 0 20 20"><circle cx="10" cy="10" r="10" fill="#4ea982"/><path d="M4.9 10.4L8.7 14.2L15.5 7.6" stroke="#fff" stroke-width="2.8" fill="none" stroke-linecap="round" stroke-linejoin="round"/></svg></div>
<div class="ico" style="left:558.4px;top:366.5px"><svg width="20" height="20" viewBox="0 0 20 20"><circle cx="10" cy="10" r="10" fill="#4ea982"/><path d="M4.9 10.4L8.7 14.2L15.5 7.6" stroke="#fff" stroke-width="2.8" fill="none" stroke-linecap="round" stroke-linejoin="round"/></svg></div>
<div class="ico" style="left:597.1px;top:366.5px"><svg width="20" height="20" viewBox="0 0 20 20"><circle cx="10" cy="10" r="10" fill="#4ea982"/><path d="M4.9 10.4L8.7 14.2L15.5 7.6" stroke="#fff" stroke-width="2.8" fill="none" stroke-linecap="round" stroke-linejoin="round"/></svg></div>
<div class="ico" style="left:635.8px;top:366.5px"><svg width="20" height="20" viewBox="0 0 20 20"><circle cx="10" cy="10" r="10" fill="#4ea982"/><path d="M4.9 10.4L8.7 14.2L15.5 7.6" stroke="#fff" stroke-width="2.8" fill="none" stroke-linecap="round" stroke-linejoin="round"/></svg></div>
<div class="ico" style="left:674.6px;top:366.5px"><svg width="20" height="20" viewBox="0 0 20 20"><circle cx="10" cy="10" r="10" fill="#4ea982"/><path d="M4.9 10.4L8.7 14.2L15.5 7.6" stroke="#fff" stroke-width="2.8" fill="none" stroke-linecap="round" stroke-linejoin="round"/></svg></div>
<div class="ico" style="left:713.3px;top:366.5px"><svg width="20" height="20" viewBox="0 0 20 20"><circle cx="10" cy="10" r="10" fill="#4ea982"/><path d="M4.9 10.4L8.7 14.2L15.5 7.6" stroke="#fff" stroke-width="2.8" fill="none" stroke-linecap="round" stroke-linejoin="round"/></svg></div>
<div class="ico" style="left:752.0px;top:366.5px"><svg width="20" height="20" viewBox="0 0 20 20"><circle cx="10" cy="10" r="10" fill="#4ea982"/><path d="M4.9 10.4L8.7 14.2L15.5 7.6" stroke="#fff" stroke-width="2.8" fill="none" stroke-linecap="round" stroke-linejoin="round"/></svg></div>
<div class="ico" style="left:790.7px;top:366.5px"><svg width="20" height="20" viewBox="0 0 20 20"><circle cx="10" cy="10" r="10" fill="#4ea982"/><path d="M4.9 10.4L8.7 14.2L15.5 7.6" stroke="#fff" stroke-width="2.8" fill="none" stroke-linecap="round" stroke-linejoin="round"/></svg></div>
<div class="ico" style="left:829.5px;top:366.5px"><svg width="20" height="20" viewBox="0 0 20 20"><circle cx="10" cy="10" r="10" fill="#4ea982"/><path d="M4.9 10.4L8.7 14.2L15.5 7.6" stroke="#fff" stroke-width="2.8" fill="none" stroke-linecap="round" stroke-linejoin="round"/></svg></div>
<div class="ico" style="left:868.2px;top:366.5px"><svg width="20" height="20" viewBox="0 0 20 20"><circle cx="10" cy="10" r="10" fill="#4ea982"/><path d="M4.9 10.4L8.7 14.2L15.5 7.6" stroke="#fff" stroke-width="2.8" fill="none" stroke-linecap="round" stroke-linejoin="round"/></svg></div>
<div class="ico" style="left:906.9px;top:366.5px"><svg width="20" height="20" viewBox="0 0 20 20"><circle cx="10" cy="10" r="10" fill="#4ea982"/><path d="M4.9 10.4L8.7 14.2L15.5 7.6" stroke="#fff" stroke-width="2.8" fill="none" stroke-linecap="round" stroke-linejoin="round"/></svg></div>
<div class="ico" style="left:945.6px;top:366.5px"><svg width="20" height="20" viewBox="0 0 20 20"><circle cx="10" cy="10" r="10" fill="#4ea982"/><path d="M4.9 10.4L8.7 14.2L15.5 7.6" stroke="#fff" stroke-width="2.8" fill="none" stroke-linecap="round" stroke-linejoin="round"/></svg></div>
<div class="ico" style="left:984.4px;top:366.5px"><svg width="20" height="20" viewBox="0 0 20 20"><circle cx="10" cy="10" r="10" fill="#4ea982"/><path d="M4.9 10.4L8.7 14.2L15.5 7.6" stroke="#fff" stroke-width="2.8" fill="none" stroke-linecap="round" stroke-linejoin="round"/></svg></div>
<div class="ico" style="left:1015.7px;top:366.5px"><svg width="20" height="20" viewBox="0 0 20 20"><circle cx="10" cy="10" r="10" fill="#4ea982"/><path d="M4.9 10.4L8.7 14.2L15.5 7.6" stroke="#fff" stroke-width="2.8" fill="none" stroke-linecap="round" stroke-linejoin="round"/></svg></div>
<div class="t" style="left:46px;top:397.7px;">Fri</div>
<div class="ico" style="left:132.4px;top:395.3px"><svg width="20" height="20" viewBox="0 0 20 20"><circle cx="10" cy="10" r="10" fill="#4ea982"/><path d="M4.9 10.4L8.7 14.2L15.5 7.6" stroke="#fff" stroke-width="2.8" fill="none" stroke-linecap="round" stroke-linejoin="round"/></svg></div>
<div class="ico" style="left:171.1px;top:395.3px"><svg width="20" height="20" viewBox="0 0 20 20"><circle cx="10" cy="10" r="10" fill="#4ea982"/><path d="M4.9 10.4L8.7 14.2L15.5 7.6" stroke="#fff" stroke-width="2.8" fill="none" stroke-linecap="round" stroke-linejoin="round"/></svg></div>
<div class="ico" style="left:209.9px;top:395.3px"><svg width="20" height="20" viewBox="0 0 20 20"><circle cx="10" cy="10" r="10" fill="#4ea982"/><path d="M4.9 10.4L8.7 14.2L15.5 7.6" stroke="#fff" stroke-width="2.8" fill="none" stroke-linecap="round" stroke-linejoin="round"/></svg></div>
<div class="ico" style="left:248.6px;top:395.3px"><svg width="20" height="20" viewBox="0 0 20 20"><circle cx="10" cy="10" r="10" fill="#4ea982"/><path d="M4.9 10.4L8.7 14.2L15.5 7.6" stroke="#fff" stroke-width="2.8" fill="none" stroke-linecap="round" stroke-linejoin="round"/></svg></div>
<div class="ico" style="left:287.3px;top:395.3px"><svg width="20" height="20" viewBox="0 0 20 20"><circle cx="10" cy="10" r="10" fill="#4ea982"/><path d="M4.9 10.4L8.7 14.2L15.5 7.6" stroke="#fff" stroke-width="2.8" fill="none" stroke-linecap="round" stroke-linejoin="round"/></svg></div>
<div class="ico" style="left:326.0px;top:395.3px"><svg width="20" height="20" viewBox="0 0 20 20"><circle cx="10" cy="10" r="10" fill="#4ea982"/><path d="M4.9 10.4L8.7 14.2L15.5 7.6" stroke="#fff" stroke-width="2.8" fill="none" stroke-linecap="round" stroke-linejoin="round"/></svg></div>
<div class="ico" style="left:519.7px;top:395.3px"><svg width="20" height="20" viewBox="0 0 20 20"><circle cx="10" cy="10" r="10" fill="#4ea982"/><path d="M4.9 10.4L8.7 14.2L15.5 7.6" stroke="#fff" stroke-width="2.8" fill="none" stroke-linecap="round" stroke-linejoin="round"/></svg></div>
<div class="ico" style="left:558.4px;top:395.3px"><svg width="20" height="20" viewBox="0 0 20 20"><circle cx="10" cy="10" r="10" fill="#4ea982"/><path d="M4.9 10.4L8.7 14.2L15.5 7.6" stroke="#fff" stroke-width="2.8" fill="none" stroke-linecap="round" stroke-linejoin="round"/></svg></div>
<div class="ico" style="left:597.1px;top:395.3px"><svg width="20" height="20" viewBox="0 0 20 20"><circle cx="10" cy="10" r="10" fill="#4ea982"/><path d="M4.9 10.4L8.7 14.2L15.5 7.6" stroke="#fff" stroke-width="2.8" fill="none" stroke-linecap="round" stroke-linejoin="round"/></svg></div>
<div class="ico" style="left:635.8px;top:395.3px"><svg width="20" height="20" viewBox="0 0 20 20"><circle cx="10" cy="10" r="10" fill="#4ea982"/><path d="M4.9 10.4L8.7 14.2L15.5 7.6" stroke="#fff" stroke-width="2.8" fill="none" stroke-linecap="round" stroke-linejoin="round"/></svg></div>
<div class="ico" style="left:674.6px;top:395.3px"><svg width="20" height="20" viewBox="0 0 20 20"><circle cx="10" cy="10" r="10" fill="#4ea982"/><path d="M4.9 10.4L8.7 14.2L15.5 7.6" stroke="#fff" stroke-width="2.8" fill="none" stroke-linecap="round" stroke-linejoin="round"/></svg></div>
<div class="ico" style="left:713.3px;top:395.3px"><svg width="20" height="20" viewBox="0 0 20 20"><circle cx="10" cy="10" r="10" fill="#4ea982"/><path d="M4.9 10.4L8.7 14.2L15.5 7.6" stroke="#fff" stroke-width="2.8" fill="none" stroke-linecap="round" stroke-linejoin="round"/></svg></div>
<div class="ico" style="left:752.0px;top:395.3px"><svg width="20" height="20" viewBox="0 0 20 20"><circle cx="10" cy="10" r="10" fill="#4ea982"/><path d="M4.9 10.4L8.7 14.2L15.5 7.6" stroke="#fff" stroke-width="2.8" fill="none" stroke-linecap="round" stroke-linejoin="round"/></svg></div>
<div class="ico" style="left:790.7px;top:395.3px"><svg width="20" height="20" viewBox="0 0 20 20"><circle cx="10" cy="10" r="10" fill="#4ea982"/><path d="M4.9 10.4L8.7 14.2L15.5 7.6" stroke="#fff" stroke-width="2.8" fill="none" stroke-linecap="round" stroke-linejoin="round"/></svg></div>
<div class="ico" style="left:829.5px;top:395.3px"><svg width="20" height="20" viewBox="0 0 20 20"><circle cx="10" cy="10" r="10" fill="#4ea982"/><path d="M4.9 10.4L8.7 14.2L15.5 7.6" stroke="#fff" stroke-width="2.8" fill="none" stroke-linecap="round" stroke-linejoin="round"/></svg></div>
<div class="ico" style="left:868.2px;top:395.3px"><svg width="20" height="20" viewBox="0 0 20 20"><circle cx="10" cy="10" r="10" fill="#4ea982"/><path d="M4.9 10.4L8.7 14.2L15.5 7.6" stroke="#fff" stroke-width="2.8" fill="none" stroke-linecap="round" stroke-linejoin="round"/></svg></div>
<div class="ico" style="left:906.9px;top:395.3px"><svg width="20" height="20" viewBox="0 0 20 20"><circle cx="10" cy="10" r="10" fill="#4ea982"/><path d="M4.9 10.4L8.7 14.2L15.5 7.6" stroke="#fff" stroke-width="2.8" fill="none" stroke-linecap="round" stroke-linejoin="round"/></svg></div>
<div class="ico" style="left:945.6px;top:395.3px"><svg width="20" height="20" viewBox="0 0 20 20"><circle cx="10" cy="10" r="10" fill="#4ea982"/><path d="M4.9 10.4L8.7 14.2L15.5 7.6" stroke="#fff" stroke-width="2.8" fill="none" stroke-linecap="round" stroke-linejoin="round"/></svg></div>
<div class="ico" style="left:984.4px;top:395.3px"><svg width="20" height="20" viewBox="0 0 20 20"><circle cx="10" cy="10" r="10" fill="#4ea982"/><path d="M4.9 10.4L8.7 14.2L15.5 7.6" stroke="#fff" stroke-width="2.8" fill="none" stroke-linecap="round" stroke-linejoin="round"/></svg></div>
<div class="ico" style="left:1015.7px;top:395.3px"><svg width="20" height="20" viewBox="0 0 20 20"><circle cx="10" cy="10" r="10" fill="#4ea982"/><path d="M4.9 10.4L8.7 14.2L15.5 7.6" stroke="#fff" stroke-width="2.8" fill="none" stroke-linecap="round" stroke-linejoin="round"/></svg></div>
<div class="t" style="left:46px;top:426.5px;">Sat</div>
<div class="ico" style="left:132.4px;top:424.1px"><svg width="20" height="20" viewBox="0 0 20 20"><circle cx="10" cy="10" r="10" fill="#4ea982"/><path d="M4.9 10.4L8.7 14.2L15.5 7.6" stroke="#fff" stroke-width="2.8" fill="none" stroke-linecap="round" stroke-linejoin="round"/></svg></div>
<div class="ico" style="left:171.1px;top:424.1px"><svg width="20" height="20" viewBox="0 0 20 20"><circle cx="10" cy="10" r="10" fill="#4ea982"/><path d="M4.9 10.4L8.7 14.2L15.5 7.6" stroke="#fff" stroke-width="2.8" fill="none" stroke-linecap="round" stroke-linejoin="round"/></svg></div>
<div class="ico" style="left:209.9px;top:424.1px"><svg width="20" height="20" viewBox="0 0 20 20"><circle cx="10" cy="10" r="10" fill="#4ea982"/><path d="M4.9 10.4L8.7 14.2L15.5 7.6" stroke="#fff" stroke-width="2.8" fill="none" stroke-linecap="round" stroke-linejoin="round"/></svg></div>
<div class="ico" style="left:248.6px;top:424.1px"><svg width="20" height="20" viewBox="0 0 20 20"><circle cx="10" cy="10" r="10" fill="#4ea982"/><path d="M4.9 10.4L8.7 14.2L15.5 7.6" stroke="#fff" stroke-width="2.8" fill="none" stroke-linecap="round" stroke-linejoin="round"/></svg></div>
<div class="ico" style="left:287.3px;top:424.1px"><svg width="20" height="20" viewBox="0 0 20 20"><circle cx="10" cy="10" r="10" fill="#4ea982"/><path d="M4.9 10.4L8.7 14.2L15.5 7.6" stroke="#fff" stroke-width="2.8" fill="none" stroke-linecap="round" stroke-linejoin="round"/></svg></div>
<div class="ico" style="left:326.0px;top:424.1px"><svg width="20" height="20" viewBox="0 0 20 20"><circle cx="10" cy="10" r="10" fill="#4ea982"/><path d="M4.9 10.4L8.7 14.2L15.5 7.6" stroke="#fff" stroke-width="2.8" fill="none" stroke-linecap="round" stroke-linejoin="round"/></svg></div>
<div class="ico" style="left:364.8px;top:424.1px"><svg width="20" height="20" viewBox="0 0 20 20"><circle cx="10" cy="10" r="10" fill="#4ea982"/><path d="M4.9 10.4L8.7 14.2L15.5 7.6" stroke="#fff" stroke-width="2.8" fill="none" stroke-linecap="round" stroke-linejoin="round"/></svg></div>
<div class="ico" style="left:403.5px;top:424.1px"><svg width="20" height="20" viewBox="0 0 20 20"><circle cx="10" cy="10" r="10" fill="#4ea982"/><path d="M4.9 10.4L8.7 14.2L15.5 7.6" stroke="#fff" stroke-width="2.8" fill="none" stroke-linecap="round" stroke-linejoin="round"/></svg></div>
<div class="ico" style="left:442.2px;top:424.1px"><svg width="20" height="20" viewBox="0 0 20 20"><circle cx="10" cy="10" r="10" fill="#4ea982"/><path d="M4.9 10.4L8.7 14.2L15.5 7.6" stroke="#fff" stroke-width="2.8" fill="none" stroke-linecap="round" stroke-linejoin="round"/></svg></div>
<div class="ico" style="left:480.9px;top:424.1px"><svg width="20" height="20" viewBox="0 0 20 20"><circle cx="10" cy="10" r="10" fill="#4ea982"/><path d="M4.9 10.4L8.7 14.2L15.5 7.6" stroke="#fff" stroke-width="2.8" fill="none" stroke-linecap="round" stroke-linejoin="round"/></svg></div>
<div class="ico" style="left:519.7px;top:424.1px"><svg width="20" height="20" viewBox="0 0 20 20"><circle cx="10" cy="10" r="10" fill="#4ea982"/><path d="M4.9 10.4L8.7 14.2L15.5 7.6" stroke="#fff" stroke-width="2.8" fill="none" stroke-linecap="round" stroke-linejoin="round"/></svg></div>
<div class="ico" style="left:558.4px;top:424.1px"><svg width="20" height="20" viewBox="0 0 20 20"><circle cx="10" cy="10" r="10" fill="#4ea982"/><path d="M4.9 10.4L8.7 14.2L15.5 7.6" stroke="#fff" stroke-width="2.8" fill="none" stroke-linecap="round" stroke-linejoin="round"/></svg></div>
<div class="ico" style="left:597.1px;top:424.1px"><svg width="20" height="20" viewBox="0 0 20 20"><circle cx="10" cy="10" r="10" fill="#4ea982"/><path d="M4.9 10.4L8.7 14.2L15.5 7.6" stroke="#fff" stroke-width="2.8" fill="none" stroke-linecap="round" stroke-linejoin="round"/></svg></div>
<div class="ico" style="left:635.8px;top:424.1px"><svg width="20" height="20" viewBox="0 0 20 20"><circle cx="10" cy="10" r="10" fill="#4ea982"/><path d="M4.9 10.4L8.7 14.2L15.5 7.6" stroke="#fff" stroke-width="2.8" fill="none" stroke-linecap="round" stroke-linejoin="round"/></svg></div>
<div class="ico" style="left:674.6px;top:424.1px"><svg width="20" height="20" viewBox="0 0 20 20"><circle cx="10" cy="10" r="10" fill="#4ea982"/><path d="M4.9 10.4L8.7 14.2L15.5 7.6" stroke="#fff" stroke-width="2.8" fill="none" stroke-linecap="round" stroke-linejoin="round"/></svg></div>
<div class="ico" style="left:713.3px;top:424.1px"><svg width="20" height="20" viewBox="0 0 20 20"><circle cx="10" cy="10" r="10" fill="#4ea982"/><path d="M4.9 10.4L8.7 14.2L15.5 7.6" stroke="#fff" stroke-width="2.8" fill="none" stroke-linecap="round" stroke-linejoin="round"/></svg></div>
<div class="ico" style="left:752.0px;top:424.1px"><svg width="20" height="20" viewBox="0 0 20 20"><circle cx="10" cy="10" r="10" fill="#4ea982"/><path d="M4.9 10.4L8.7 14.2L15.5 7.6" stroke="#fff" stroke-width="2.8" fill="none" stroke-linecap="round" stroke-linejoin="round"/></svg></div>
<div class="ico" style="left:790.7px;top:424.1px"><svg width="20" height="20" viewBox="0 0 20 20"><circle cx="10" cy="10" r="10" fill="#4ea982"/><path d="M4.9 10.4L8.7 14.2L15.5 7.6" stroke="#fff" stroke-width="2.8" fill="none" stroke-linecap="round" stroke-linejoin="round"/></svg></div>
<div class="ico" style="left:829.5px;top:424.1px"><svg width="20" height="20" viewBox="0 0 20 20"><circle cx="10" cy="10" r="10" fill="#4ea982"/><path d="M4.9 10.4L8.7 14.2L15.5 7.6" stroke="#fff" stroke-width="2.8" fill="none" stroke-linecap="round" stroke-linejoin="round"/></svg></div>
<div class="ico" style="left:868.2px;top:424.1px"><svg width="20" height="20" viewBox="0 0 20 20"><circle cx="10" cy="10" r="10" fill="#4ea982"/><path d="M4.9 10.4L8.7 14.2L15.5 7.6" stroke="#fff" stroke-width="2.8" fill="none" stroke-linecap="round" stroke-linejoin="round"/></svg></div>
<div class="ico" style="left:906.9px;top:424.1px"><svg width="20" height="20" viewBox="0 0 20 20"><circle cx="10" cy="10" r="10" fill="#4ea982"/><path d="M4.9 10.4L8.7 14.2L15.5 7.6" stroke="#fff" stroke-width="2.8" fill="none" stroke-linecap="round" stroke-linejoin="round"/></svg></div>
<div class="ico" style="left:945.6px;top:424.1px"><svg width="20" height="20" viewBox="0 0 20 20"><circle cx="10" cy="10" r="10" fill="#4ea982"/><path d="M4.9 10.4L8.7 14.2L15.5 7.6" stroke="#fff" stroke-width="2.8" fill="none" stroke-linecap="round" stroke-linejoin="round"/></svg></div>
<div class="ico" style="left:984.4px;top:424.1px"><svg width="20" height="20" viewBox="0 0 20 20"><circle cx="10" cy="10" r="10" fill="#4ea982"/><path d="M4.9 10.4L8.7 14.2L15.5 7.6" stroke="#fff" stroke-width="2.8" fill="none" stroke-linecap="round" stroke-linejoin="round"/></svg></div>
<div class="ico" style="left:1015.7px;top:424.1px"><svg width="20" height="20" viewBox="0 0 20 20"><circle cx="10" cy="10" r="10" fill="#4ea982"/><path d="M4.9 10.4L8.7 14.2L15.5 7.6" stroke="#fff" stroke-width="2.8" fill="none" stroke-linecap="round" stroke-linejoin="round"/></svg></div>
<div class="t" style="left:46px;top:455.3px;">Sun</div>
<div class="ico" style="left:132.4px;top:452.9px"><svg width="20" height="20" viewBox="0 0 20 20"><circle cx="10" cy="10" r="10" fill="#4ea982"/><path d="M4.9 10.4L8.7 14.2L15.5 7.6" stroke="#fff" stroke-width="2.8" fill="none" stroke-linecap="round" stroke-linejoin="round"/></svg></div>
<div class="ico" style="left:171.1px;top:452.9px"><svg width="20" height="20" viewBox="0 0 20 20"><circle cx="10" cy="10" r="10" fill="#4ea982"/><path d="M4.9 10.4L8.7 14.2L15.5 7.6" stroke="#fff" stroke-width="2.8" fill="none" stroke-linecap="round" stroke-linejoin="round"/></svg></div>
<div class="ico" style="left:209.9px;top:452.9px"><svg width="20" height="20" viewBox="0 0 20 20"><circle cx="10" cy="10" r="10" fill="#4ea982"/><path d="M4.9 10.4L8.7 14.2L15.5 7.6" stroke="#fff" stroke-width="2.8" fill="none" stroke-linecap="round" stroke-linejoin="round"/></svg></div>
<div class="ico" style="left:248.6px;top:452.9px"><svg width="20" height="20" viewBox="0 0 20 20"><circle cx="10" cy="10" r="10" fill="#4ea982"/><path d="M4.9 10.4L8.7 14.2L15.5 7.6" stroke="#fff" stroke-width="2.8" fill="none" stroke-linecap="round" stroke-linejoin="round"/></svg></div>
<div class="ico" style="left:287.3px;top:452.9px"><svg width="20" height="20" viewBox="0 0 20 20"><circle cx="10" cy="10" r="10" fill="#4ea982"/><path d="M4.9 10.4L8.7 14.2L15.5 7.6" stroke="#fff" stroke-width="2.8" fill="none" stroke-linecap="round" stroke-linejoin="round"/></svg></div>
<div class="ico" style="left:326.0px;top:452.9px"><svg width="20" height="20" viewBox="0 0 20 20"><circle cx="10" cy="10" r="10" fill="#4ea982"/><path d="M4.9 10.4L8.7 14.2L15.5 7.6" stroke="#fff" stroke-width="2.8" fill="none" stroke-linecap="round" stroke-linejoin="round"/></svg></div>
<div class="ico" style="left:364.8px;top:452.9px"><svg width="20" height="20" viewBox="0 0 20 20"><circle cx="10" cy="10" r="10" fill="#4ea982"/><path d="M4.9 10.4L8.7 14.2L15.5 7.6" stroke="#fff" stroke-width="2.8" fill="none" stroke-linecap="round" stroke-linejoin="round"/></svg></div>
<div class="ico" style="left:403.5px;top:452.9px"><svg width="20" height="20" viewBox="0 0 20 20"><circle cx="10" cy="10" r="10" fill="#4ea982"/><path d="M4.9 10.4L8.7 14.2L15.5 7.6" stroke="#fff" stroke-width="2.8" fill="none" stroke-linecap="round" stroke-linejoin="round"/></svg></div>
<div class="ico" style="left:442.2px;top:452.9px"><svg width="20" height="20" viewBox="0 0 20 20"><circle cx="10" cy="10" r="10" fill="#4ea982"/><path d="M4.9 10.4L8.7 14.2L15.5 7.6" stroke="#fff" stroke-width="2.8" fill="none" stroke-linecap="round" stroke-linejoin="round"/></svg></div>
<div class="ico" style="left:480.9px;top:452.9px"><svg width="20" height="20" viewBox="0 0 20 20"><circle cx="10" cy="10" r="10" fill="#4ea982"/><path d="M4.9 10.4L8.7 14.2L15.5 7.6" stroke="#fff" stroke-width="2.8" fill="none" stroke-linecap="round" stroke-linejoin="round"/></svg></div>
<div class="ico" style="left:519.7px;top:452.9px"><svg width="20" height="20" viewBox="0 0 20 20"><circle cx="10" cy="10" r="10" fill="#4ea982"/><path d="M4.9 10.4L8.7 14.2L15.5 7.6" stroke="#fff" stroke-width="2.8" fill="none" stroke-linecap="round" stroke-linejoin="round"/></svg></div>
<div class="ico" style="left:558.4px;top:452.9px"><svg width="20" height="20" viewBox="0 0 20 20"><circle cx="10" cy="10" r="10" fill="#4ea982"/><path d="M4.9 10.4L8.7 14.2L15.5 7.6" stroke="#fff" stroke-width="2.8" fill="none" stroke-linecap="round" stroke-linejoin="round"/></svg></div>
<div class="ico" style="left:597.1px;top:452.9px"><svg width="20" height="20" viewBox="0 0 20 20"><circle cx="10" cy="10" r="10" fill="#4ea982"/><path d="M4.9 10.4L8.7 14.2L15.5 7.6" stroke="#fff" stroke-width="2.8" fill="none" stroke-linecap="round" stroke-linejoin="round"/></svg></div>
<div class="ico" style="left:635.8px;top:452.9px"><svg width="20" height="20" viewBox="0 0 20 20"><circle cx="10" cy="10" r="10" fill="#4ea982"/><path d="M4.9 10.4L8.7 14.2L15.5 7.6" stroke="#fff" stroke-width="2.8" fill="none" stroke-linecap="round" stroke-linejoin="round"/></svg></div>
<div class="ico" style="left:674.6px;top:452.9px"><svg width="20" height="20" viewBox="0 0 20 20"><circle cx="10" cy="10" r="10" fill="#4ea982"/><path d="M4.9 10.4L8.7 14.2L15.5 7.6" stroke="#fff" stroke-width="2.8" fill="none" stroke-linecap="round" stroke-linejoin="round"/></svg></div>
<div class="ico" style="left:713.3px;top:452.9px"><svg width="20" height="20" viewBox="0 0 20 20"><circle cx="10" cy="10" r="10" fill="#4ea982"/><path d="M4.9 10.4L8.7 14.2L15.5 7.6" stroke="#fff" stroke-width="2.8" fill="none" stroke-linecap="round" stroke-linejoin="round"/></svg></div>
<div class="ico" style="left:752.0px;top:452.9px"><svg width="20" height="20" viewBox="0 0 20 20"><circle cx="10" cy="10" r="10" fill="#4ea982"/><path d="M4.9 10.4L8.7 14.2L15.5 7.6" stroke="#fff" stroke-width="2.8" fill="none" stroke-linecap="round" stroke-linejoin="round"/></svg></div>
<div class="ico" style="left:790.7px;top:452.9px"><svg width="20" height="20" viewBox="0 0 20 20"><circle cx="10" cy="10" r="10" fill="#4ea982"/><path d="M4.9 10.4L8.7 14.2L15.5 7.6" stroke="#fff" stroke-width="2.8" fill="none" stroke-linecap="round" stroke-linejoin="round"/></svg></div>
<div class="ico" style="left:829.5px;top:452.9px"><svg width="20" height="20" viewBox="0 0 20 20"><circle cx="10" cy="10" r="10" fill="#4ea982"/><path d="M4.9 10.4L8.7 14.2L15.5 7.6" stroke="#fff" stroke-width="2.8" fill="none" stroke-linecap="round" stroke-linejoin="round"/></svg></div>
<div class="ico" style="left:868.2px;top:452.9px"><svg width="20" height="20" viewBox="0 0 20 20"><circle cx="10" cy="10" r="10" fill="#4ea982"/><path d="M4.9 10.4L8.7 14.2L15.5 7.6" stroke="#fff" stroke-width="2.8" fill="none" stroke-linecap="round" stroke-linejoin="round"/></svg></div>
<div class="ico" style="left:906.9px;top:452.9px"><svg width="20" height="20" viewBox="0 0 20 20"><circle cx="10" cy="10" r="10" fill="#4ea982"/><path d="M4.9 10.4L8.7 14.2L15.5 7.6" stroke="#fff" stroke-width="2.8" fill="none" stroke-linecap="round" stroke-linejoin="round"/></svg></div>
<div class="ico" style="left:945.6px;top:452.9px"><svg width="20" height="20" viewBox="0 0 20 20"><circle cx="10" cy="10" r="10" fill="#4ea982"/><path d="M4.9 10.4L8.7 14.2L15.5 7.6" stroke="#fff" stroke-width="2.8" fill="none" stroke-linecap="round" stroke-linejoin="round"/></svg></div>
<div class="ico" style="left:984.4px;top:452.9px"><svg width="20" height="20" viewBox="0 0 20 20"><circle cx="10" cy="10" r="10" fill="#4ea982"/><path d="M4.9 10.4L8.7 14.2L15.5 7.6" stroke="#fff" stroke-width="2.8" fill="none" stroke-linecap="round" stroke-linejoin="round"/></svg></div>
<div class="ico" style="left:1015.7px;top:452.9px"><svg width="20" height="20" viewBox="0 0 20 20"><circle cx="10" cy="10" r="10" fill="#4ea982"/><path d="M4.9 10.4L8.7 14.2L15.5 7.6" stroke="#fff" stroke-width="2.8" fill="none" stroke-linecap="round" stroke-linejoin="round"/></svg></div>
<div class="btn" style="left:105px;top:503px;width:162px;height:29px"></div>
<div class="t" style="left:86.0px;top:509px;width:200px;text-align:center;"></div>
<div class="t" style="left:157.80px;top:510px;letter-spacing:-0.228px;">Select All</div>
<div class="btn" style="left:446px;top:503px;width:162px;height:29px"></div>
<div class="t" style="left:427.0px;top:509px;width:200px;text-align:center;"></div>
<div class="t" style="left:502.20px;top:510px;letter-spacing:-0.062px;">Clear All</div>
<div class="btn" style="left:787px;top:503px;width:162px;height:29px"></div>
<div class="t" style="left:768.0px;top:509px;width:200px;text-align:center;"></div>
<div class="t" style="left:851.40px;top:510px;letter-spacing:0.095px;">Invert</div>
<div style="position:absolute;left:34px;top:553px;width:367px;height:20px;background:#f0f0f0"></div>
<div class="chk" style="left:17px;top:554px"></div>
<div class="t" style="left:36.80px;top:553.5px;letter-spacing:-0.049px;">Exclude hours that have Format Scheduler clock overrides</div>
<div class="grp" style="left:12px;top:600px;width:1034px;height:99px"></div>
<div class="gtb" style="left:22px;top:587px;width:65px;height:22px"></div>
<div class="t" style="left:27px;top:590px;"></div>
<div class="t" style="left:26.80px;top:590px;letter-spacing:0.013px;">Category</div>
<div class="rad" style="left:17.5px;top:617px"></div>
<div class="t" style="left:37.00px;top:616px;letter-spacing:0.246px;">Import all songs uncategorized</div>
<div class="rad" style="left:17.5px;top:647px"></div>
<div class="dot" style="left:21.0px;top:650.5px"></div>
<div class="t" style="left:38.00px;top:646px;letter-spacing:0.097px;">Attempt to match the source station's category by category code (Songs in unmatched categories will be uncategorized)</div>
<div class="rad" style="left:17.5px;top:676px"></div>
<div class="t" style="left:37.00px;top:674px;letter-spacing:0.124px;">Import songs into a specific category</div>
<div class="cmb dis" style="left:335px;top:669px;width:285px;height:24px"></div>
<div class="cbtn dis" style="left:600px;top:670px;width:19px;height:22px"></div>
<div class="arr" style="left:604.7px;top:678.3px"><svg width="9" height="5" viewBox="0 0 9 5"><path d="M0 0H9L4.5 5Z" fill="#6b6b76"/></svg></div>
<div class="t" style="left:339px;top:673px;color:#a6a6a6"></div>
<div class="t" style="left:339.40px;top:674px;transform:scaleX(0.9038);transform-origin:0 0;color:#a6a6a6">A - 90s POWER</div>
<div class="btn def" style="left:818px;top:709px;width:112px;height:28px"></div>
<div class="t" style="left:774.0px;top:715px;width:200px;text-align:center;"></div>
<div class="t" style="left:865.00px;top:715px;transform:scaleX(0.8617);transform-origin:0 0;">OK</div>
<div class="btn" style="left:934px;top:709px;width:113px;height:28px"></div>
<div class="t" style="left:890.5px;top:715px;width:200px;text-align:center;"></div>
<div class="t" style="left:970.20px;top:715px;transform:scaleX(0.9225);transform-origin:0 0;">Cancel</div>
</body></html>
